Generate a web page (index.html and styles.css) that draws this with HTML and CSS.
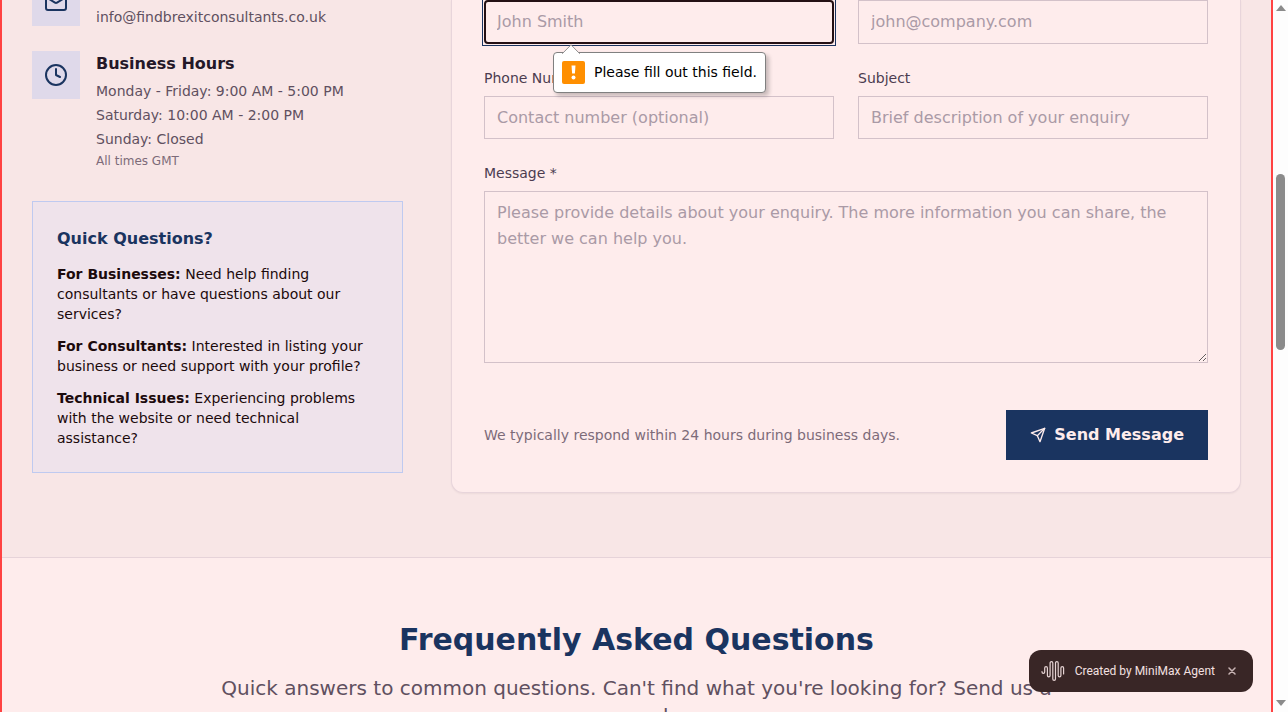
FILE: index.html
```html
<!DOCTYPE html>
<html lang="en">
<head>
<meta charset="utf-8">
<title>Contact</title>
<link rel="stylesheet" href="styles.css">
</head>
<body>
<div class="page">
  <section class="contact">
    <div class="contact-grid">
      <aside class="info">
        <div class="info-item">
          <span class="icon-box icon-box-cut">
            <svg width="24" height="24" viewBox="0 0 24 24"><rect x="2" y="4" width="20" height="16" rx="2"/><path d="m22 7-8.97 5.7a1.94 1.94 0 0 1-2.06 0L2 7"/></svg>
          </span>
          <p class="info-mail">info@findbrexitconsultants.co.uk</p>
        </div>
        <div class="info-item">
          <span class="icon-box">
            <svg width="24" height="24" viewBox="0 0 24 24"><circle cx="12" cy="12" r="10"/><path d="M12 6v6l4 2"/></svg>
          </span>
          <div>
            <h3 class="info-title">Business Hours</h3>
            <p class="info-line">Monday - Friday: 9:00 AM - 5:00 PM</p>
            <p class="info-line">Saturday: 10:00 AM - 2:00 PM</p>
            <p class="info-line">Sunday: Closed</p>
            <p class="info-note">All times GMT</p>
          </div>
        </div>
        <div class="quick">
          <h3 class="quick-title">Quick Questions?</h3>
          <p><strong>For Businesses:</strong> Need help finding consultants or have questions about our services?</p>
          <p><strong>For Consultants:</strong> Interested in listing your business or need support with your profile?</p>
          <p><strong>Technical Issues:</strong> Experiencing problems with the website or need technical assistance?</p>
        </div>
      </aside>
      <form class="card">
        <div class="fields">
          <div class="field name-field">
            <input class="control control-first control-focus" type="text" aria-label="Name" placeholder="John Smith">
            <div class="bubble" role="alert">
              <svg class="bubble-arrow" width="18" height="10" viewBox="0 0 18 10"><path d="M.5 9.500 9 .8l8.500 8.700" fill="#fff" stroke="#909090"/></svg>
              <svg width="23" height="23" viewBox="0 0 23 23"><rect width="23" height="23" rx="2" fill="#ff8f00"/><path d="M9.500 4.500h4l-.6 8h-2.800z" fill="#fff"/><circle cx="11.500" cy="16.500" r="2" fill="#fff"/></svg>
              <span>Please fill out this field.</span>
            </div>
          </div>
          <div class="field">
            <input class="control control-first" type="email" aria-label="Email" placeholder="john@company.com">
          </div>
          <div class="field">
            <label for="phone">Phone Number</label>
            <input class="control" id="phone" type="tel" placeholder="Contact number (optional)">
          </div>
          <div class="field">
            <label for="subject">Subject</label>
            <input class="control" id="subject" type="text" placeholder="Brief description of your enquiry">
          </div>
          <div class="field field-wide">
            <label for="message">Message *</label>
            <textarea class="control control-area" id="message" placeholder="Please provide details about your enquiry. The more information you can share, the better we can help you."></textarea>
          </div>
        </div>
        <div class="actions">
          <p>We typically respond within 24 hours during business days.</p>
          <button class="send" type="submit">
            <svg width="16" height="16" viewBox="0 0 24 24"><path d="M22 2 15 22l-4-9-9-4z"/><path d="M22 2 11 13"/></svg>
            Send Message
          </button>
        </div>
      </form>
    </div>
  </section>
  <section class="faq">
    <h2>Frequently Asked Questions</h2>
    <p>Quick answers to common questions. Can't find what you're looking for? Send us a message above.</p>
  </section>
</div>
<div class="scrollbar" aria-hidden="true">
  <span class="arrow arrow-up"></span>
  <span class="thumb"></span>
  <span class="arrow arrow-down"></span>
</div>
<div class="badge">
  <svg class="wave" width="26" height="22" viewBox="0 0 26 22"><path d="M1 11.500v.5a1.350 1.350 0 0 0 2.700 0V8a1.350 1.350 0 0 1 2.700 0v7.500a1.350 1.350 0 0 0 2.700 0V3a1.350 1.350 0 0 1 2.700 0v16a1.350 1.350 0 0 0 2.700 0V3a1.350 1.350 0 0 1 2.700 0v12.500a1.350 1.350 0 0 0 2.700 0V8a1.350 1.350 0 0 1 2.700 0v6M11.800 14.500V3"/></svg>
  <span>Created by MiniMax Agent</span>
  <button class="badge-close" type="button" aria-label="Close"><svg width="8" height="8" viewBox="0 0 8 8"><path d="m1 1 6 6M7 1 1 7"/></svg></button>
</div>
</body>
</html>
```
FILE: styles.css
```css
* { box-sizing: border-box; margin: 0; }
body {
  display: flex;
  height: 100vh;
  overflow: hidden;
  font: 14px/20px "DejaVu Sans", sans-serif;
  color: #1c0a0c;
  background: #feecec;
}
svg { flex: none; fill: none; stroke-linecap: round; stroke-linejoin: round; }

.page {
  flex: 1;
  position: relative;
  height: 100vh;
  overflow: hidden;
}
.page::after {
  content: "";
  position: absolute;
  inset: 0;
  border: solid #ff4242;
  border-width: 0 2px;
  pointer-events: none;
}

.contact {
  padding: 0 32px 64px;
  background: #f8e6e6;
  border-bottom: 1px solid #e6d3d9;
}
.contact-grid {
  display: grid;
  grid-template-columns: repeat(3, minmax(0, 1fr));
  column-gap: 48px;
  align-items: start;
  max-width: 1216px;
  margin: 0 auto;
}

.info-item { display: flex; gap: 16px; color: #605060; }
.info-item + .info-item { margin-top: 23px; }
.icon-box {
  display: flex;
  flex: none;
  align-items: center;
  justify-content: center;
  width: 48px;
  height: 48px;
  background: #dfd9ea;
}
.icon-box svg { stroke: #1a3460; stroke-width: 2; }
.icon-box-cut { margin-top: -22px; }
.info-mail { padding-top: 6px; line-height: 22px; }
.info-title { margin-bottom: 2px; font-size: 16px; line-height: 26px; color: #241828; }
.info-line { line-height: 24px; }
.info-note { margin-top: 2px; font-size: 12px; line-height: 16px; color: #7d6b79; }

.quick {
  margin-top: 32px;
  padding: 24px;
  background: #efe3eb;
  border: 1px solid #bfcaf0;
}
.quick-title { margin-bottom: 12px; font-size: 16px; line-height: 26px; color: #1a3460; }
.quick p + p { margin-top: 12px; }

.card {
  grid-column: span 2;
  padding: 0 32px 32px;
  background: #feecec;
  border: 1px solid #e8d5db;
  border-top: 0;
  border-radius: 0 0 12px 12px;
  box-shadow: 0 1px 2px #0000000d;
}
.fields {
  display: grid;
  grid-template-columns: repeat(2, minmax(0, 1fr));
  gap: 24px;
}
.field-wide { grid-column: span 2; }
.name-field {
  position: relative;
  box-shadow: 0 0 0 1px #feecec, 0 0 0 2px #1a3460;
}
label { display: block; margin-bottom: 8px; color: #4c3c50; }
.control {
  display: block;
  width: 100%;
  height: 43px;
  padding: 8px 12px;
  font: 16px/26px "DejaVu Sans", sans-serif;
  color: #1c0a0c;
  background: #feecec;
  border: 1px solid #d3c1c9;
  border-radius: 0;
}
.control::placeholder { color: #aa9aa6; opacity: 1; }
.control-first { height: 44px; padding-bottom: 10px; }
.control-focus {
  border-color: transparent;
  outline: 2px solid #241014;
  outline-offset: -2px;
  border-radius: 4px;
}
.control-area { height: 172px; resize: vertical; }

.bubble {
  position: absolute;
  z-index: 1;
  top: 52px;
  left: 69px;
  display: flex;
  align-items: center;
  gap: 9px;
  padding: 8px;
  white-space: nowrap;
  line-height: 23px;
  color: #000;
  background: #fff;
  border: 1px solid #808080;
  border-radius: 4px;
  box-shadow: 3px 3px 4px #00000038;
}
.bubble-arrow { position: absolute; top: -9px; left: 8px; }

.actions {
  display: flex;
  align-items: center;
  justify-content: space-between;
  margin-top: 47px;
  color: #7d6b79;
}
.send {
  display: flex;
  align-items: center;
  gap: 8px;
  height: 50px;
  padding: 0 24px;
  font: bold 16px/24px "DejaVu Sans", sans-serif;
  color: #feecec;
  background: #1a3460;
  border: 0;
}
.send svg { stroke: #feecec; stroke-width: 2; }

.faq {
  max-width: 896px;
  margin: 0 auto;
  padding: 64px 32px;
  text-align: center;
}
.faq h2 { margin-bottom: 16px; font-size: 30px; line-height: 36px; color: #1a3460; }
.faq p { font-size: 20px; line-height: 28px; color: #605060; }

.scrollbar {
  display: flex;
  flex-direction: column;
  align-items: center;
  width: 15px;
  height: 100vh;
  padding: 5px 0 6px;
  background: #fdfdfd;
}
.arrow { border: solid transparent; border-width: 0 5px; }
.arrow-up { border-bottom: 6px solid #8b8b8b; }
.arrow-down { margin-top: auto; border-top: 6px solid #8b8b8b; }
.thumb { width: 9px; height: 176px; margin-top: 163px; border-radius: 5px; background: #8b8b8b; }

.badge {
  position: fixed;
  right: 35px;
  bottom: 20px;
  display: flex;
  align-items: center;
  height: 42px;
  padding: 0 12px;
  gap: 8px;
  font: 12px/16px Roboto, sans-serif;
  color: #f3e0e0;
  background: #392626;
  border-radius: 12px;
}
.wave { stroke: #e6d3d3; stroke-width: 1.2; }
.badge-close {
  display: flex;
  align-items: center;
  justify-content: center;
  width: 18px;
  height: 18px;
  padding: 0;
  background: none;
  border: 0;
}
.badge-close svg { stroke: #c8b4b4; stroke-width: 1.5; }
```
